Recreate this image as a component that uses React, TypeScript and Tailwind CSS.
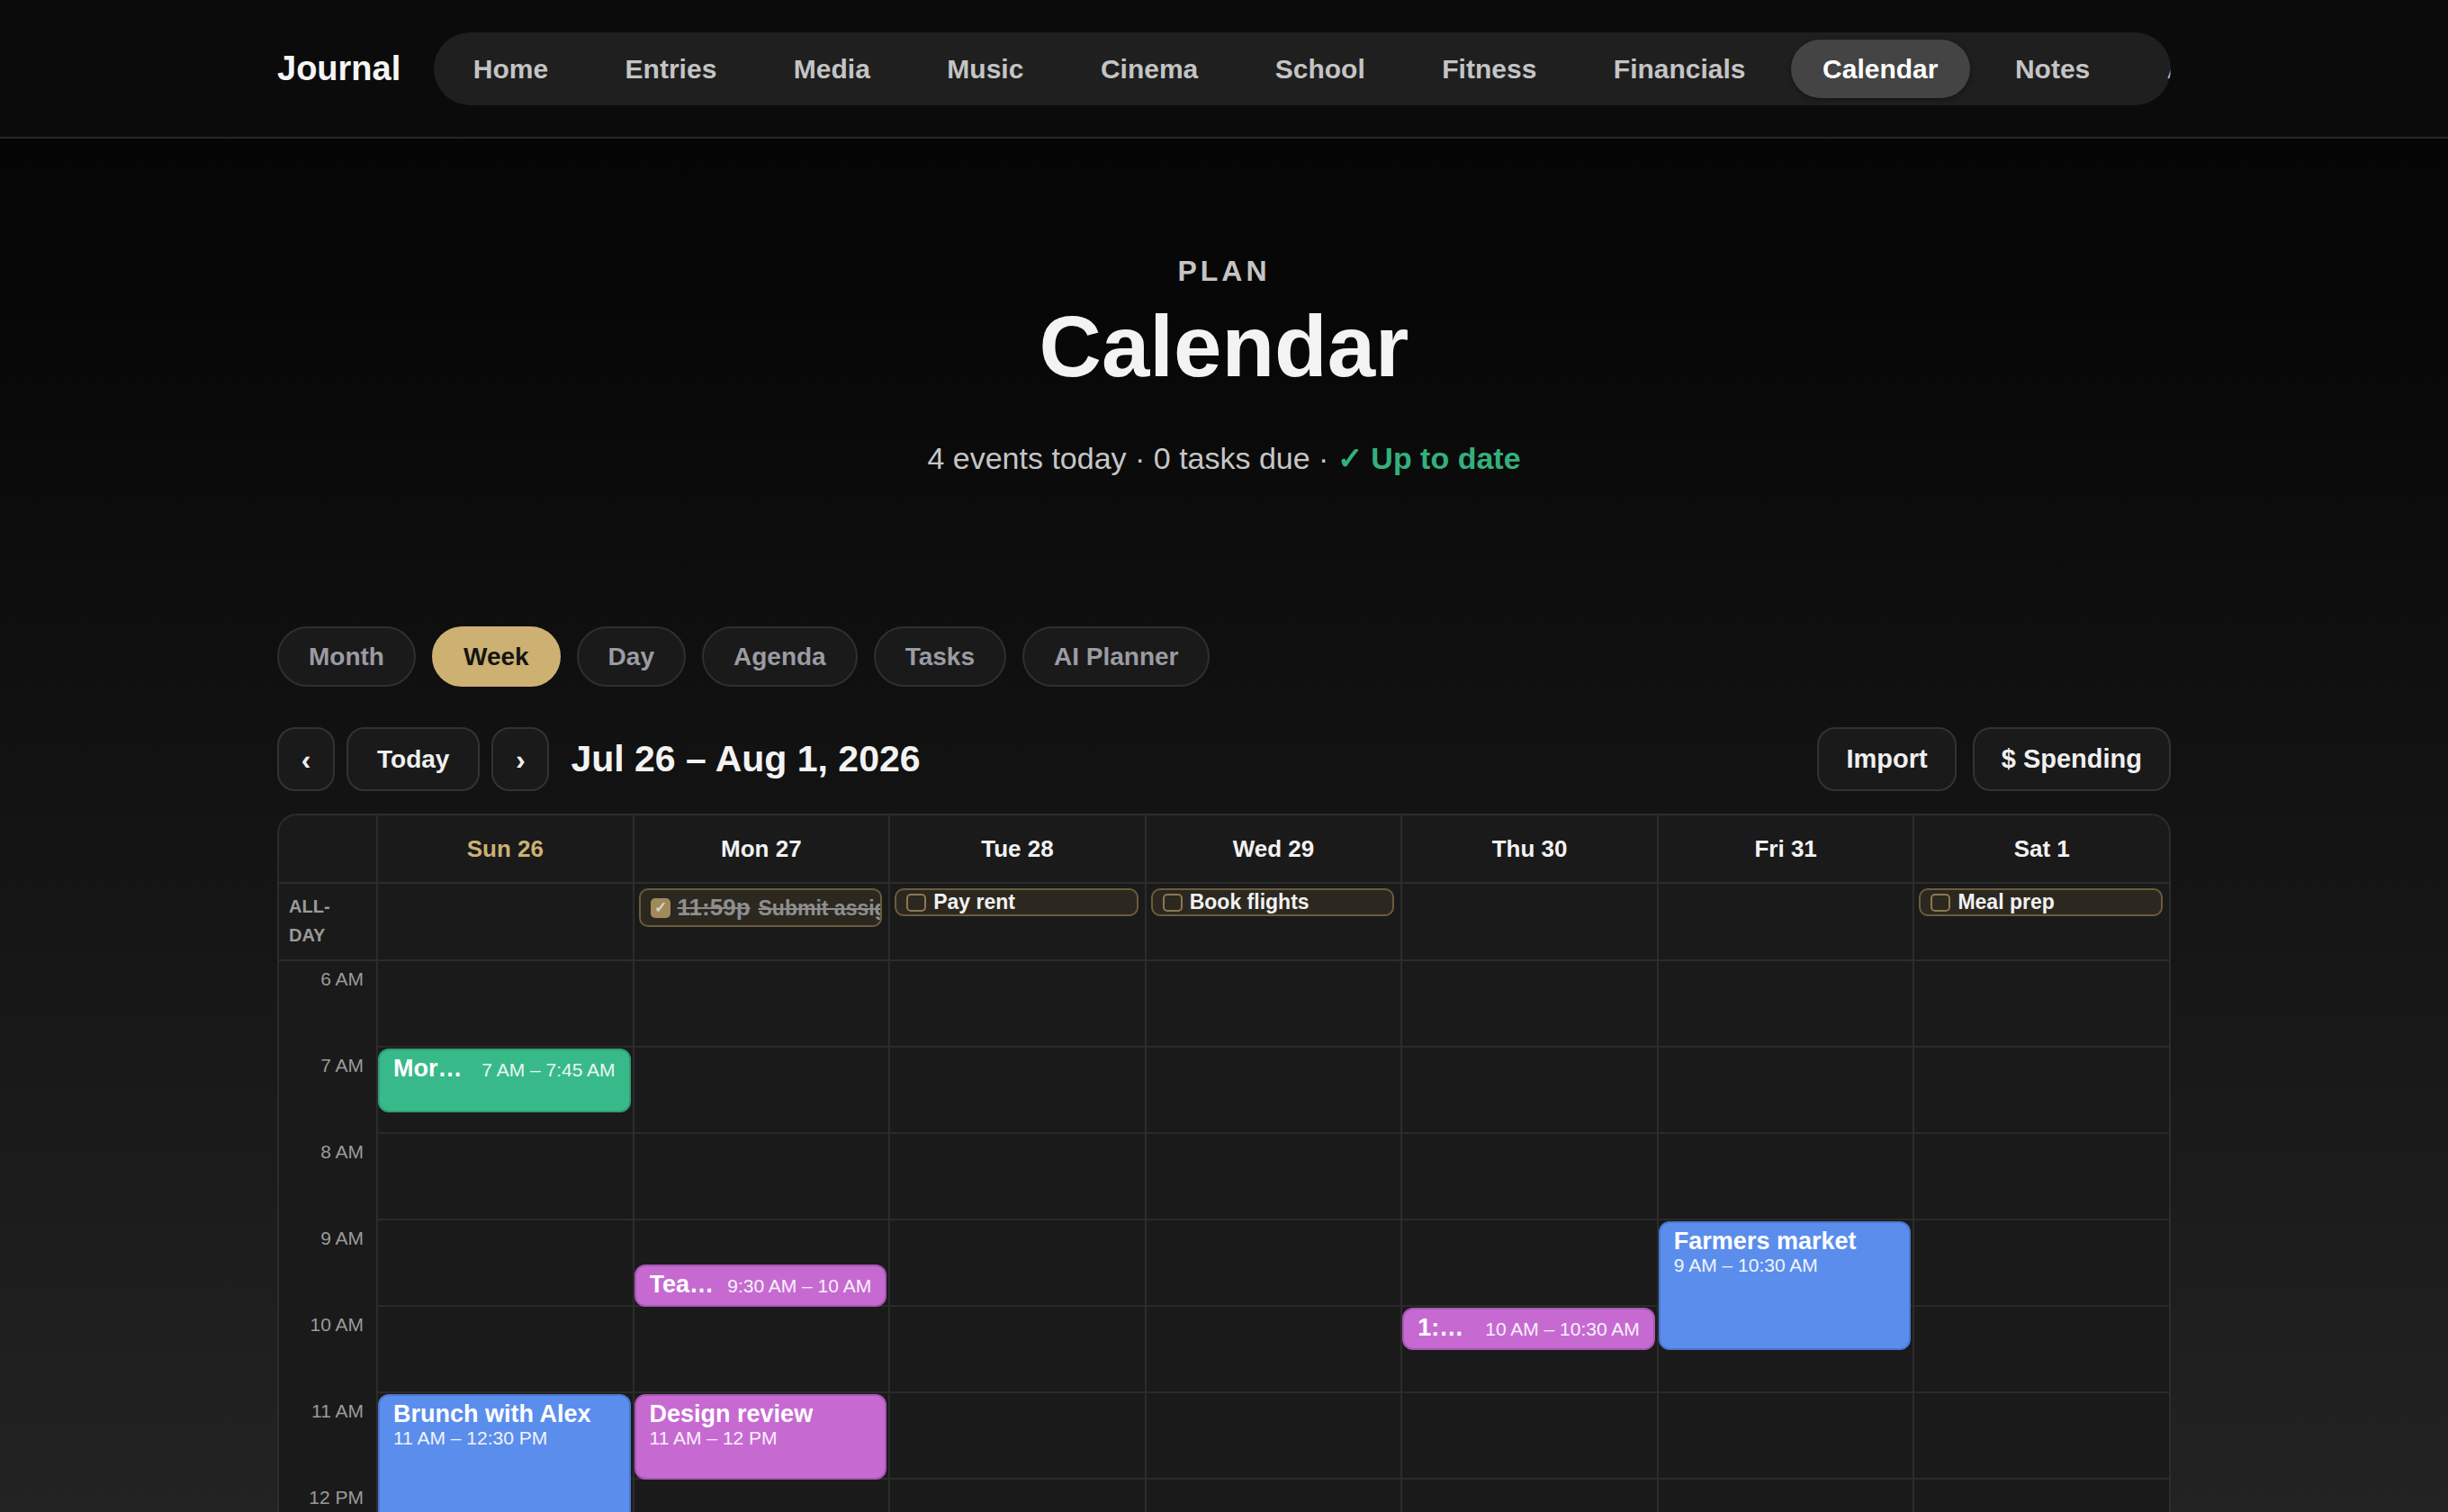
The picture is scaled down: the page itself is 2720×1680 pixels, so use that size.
import * as React from "react";

const NAV = ["Home", "Entries", "Media", "Music", "Cinema", "School", "Fitness", "Financials", "Calendar", "Notes", "Archive"];
const VIEWS = ["Month", "Week", "Day", "Agenda", "Tasks", "AI Planner"];
const DAYS = ["Sun 26", "Mon 27", "Tue 28", "Wed 29", "Thu 30", "Fri 31", "Sat 1"];
const FIRST_HOUR = 6;
const HOUR_PX = 96;

type Tone = "green" | "purple" | "blue";

const TONES: Record<Tone, string> = {
  green: "bg-[#38b98a] border-[#2f9d76]",
  purple: "bg-[#c66ad2] border-[#a856b4]",
  blue: "bg-[#5b8dec] border-[#4a77d0]",
};

type CalEvent = { day: number; start: number; end: number; title: string; tone: Tone };

const EVENTS: CalEvent[] = [
  { day: 0, start: 7, end: 7.75, title: "Morning run", tone: "green" },
  { day: 0, start: 11, end: 12.5, title: "Brunch with Alex", tone: "blue" },
  { day: 1, start: 9.5, end: 10, title: "Team standup", tone: "purple" },
  { day: 1, start: 11, end: 12, title: "Design review", tone: "purple" },
  { day: 4, start: 10, end: 10.5, title: "1:1 with Sam", tone: "purple" },
  { day: 5, start: 9, end: 10.5, title: "Farmers market", tone: "blue" },
];

type Task = { day: number; title: string; time?: string; done?: boolean };

const TASKS: Task[] = [
  { day: 1, title: "Submit assignment", time: "11:59p", done: true },
  { day: 2, title: "Pay rent" },
  { day: 3, title: "Book flights" },
  { day: 6, title: "Meal prep" },
];

function hourLabel(h: number): string {
  const suffix = h < 12 ? "AM" : "PM";
  const n = h % 12 === 0 ? 12 : h % 12;
  return `${n} ${suffix}`;
}

function timeLabel(t: number): string {
  const h = Math.floor(t);
  const m = Math.round((t - h) * 60);
  const suffix = h < 12 ? "AM" : "PM";
  const n = h % 12 === 0 ? 12 : h % 12;
  return m ? `${n}:${String(m).padStart(2, "0")} ${suffix}` : `${n} ${suffix}`;
}

const HOURS = Array.from({ length: 18 }, (_, i) => FIRST_HOUR + i);

function EventBlock({ ev }: { ev: CalEvent }) {
  const short = ev.end - ev.start <= 0.75;
  const range = `${timeLabel(ev.start)} – ${timeLabel(ev.end)}`;
  return (
    <div
      className={`absolute left-0 right-[2px] overflow-hidden rounded-[12px] border-2 px-[15px] pt-[5px] text-white ${TONES[ev.tone]}`}
      style={{ top: (ev.start - FIRST_HOUR) * HOUR_PX + 1, height: (ev.end - ev.start) * HOUR_PX - 1 }}
    >
      {short ? (
        <div className="flex items-baseline gap-[10px]">
          <span className="min-w-0 flex-1 truncate text-[27px] font-bold leading-[30px]">{ev.title}</span>
          <span className="shrink-0 text-[21px] leading-[24px] text-white/90">{range}</span>
        </div>
      ) : (
        <>
          <div className="truncate text-[27px] font-bold leading-[30px]">{ev.title}</div>
          <div className="text-[21px] leading-[24px] text-white/90">{range}</div>
        </>
      )}
    </div>
  );
}

function TaskChip({ task }: { task: Task }) {
  return (
    <div className="flex items-center gap-[8px] overflow-hidden whitespace-nowrap rounded-[10px] border-2 border-[#6b5c3b] bg-[#2c2820] py-[1px] pl-[11px] pr-[4px]">
      {task.done ? (
        <span className="flex h-[22px] w-[22px] shrink-0 items-center justify-center rounded-[5px] bg-[#a08a5b] text-[17px] font-bold leading-none text-[#d9d4c8]">
          ✓
        </span>
      ) : (
        <span className="h-[20px] w-[22px] shrink-0 rounded-[5px] border-2 border-[#8c7750]" />
      )}
      {task.time ? (
        <span className="flex items-baseline gap-[9px] text-[#8e8e8e] line-through">
          <span className="text-[26px] font-bold leading-[36px]">{task.time}</span>
          <span className="text-[23px] font-bold leading-[36px]">{task.title}</span>
        </span>
      ) : (
        <span className="text-[23px] font-bold leading-[25px] text-[#f2f2f2]">{task.title}</span>
      )}
    </div>
  );
}

export default function App() {
  return (
    <div className="min-h-screen bg-[linear-gradient(180deg,#040404_0px,#070707_350px,#111111_800px,#1b1b1b_1300px,#232323_1700px,#262626_3200px)] font-['Liberation_Sans',Arial,sans-serif] text-white">
      <header className="border-b-2 border-[#262626] bg-[#0b0b0b]">
        <div className="mx-auto flex h-[152px] max-w-[2104px] items-center gap-[37px]">
          <span className="shrink-0 text-[38px] font-bold text-[#f5f5f5]">Journal</span>
          <nav className="flex h-[81px] min-w-0 flex-1 items-center gap-[14.5px] overflow-hidden rounded-full bg-[#1f1f1f] p-2">
            {NAV.map((item) => (
              <span
                key={item}
                className={`flex h-[65px] shrink-0 items-center rounded-full px-[35.5px] text-[30px] font-bold ${
                  item === "Calendar" ? "bg-[#444444] text-white shadow-[0_2px_6px_rgba(0,0,0,0.35)]" : "text-[#c4c4c4]"
                }`}
              >
                {item}
              </span>
            ))}
          </nav>
        </div>
      </header>

      <main className="mx-auto max-w-[2104px] pb-20">
        <section className="flex flex-col items-center pt-[129px] text-center">
          <p className="text-[32px] font-bold leading-[37px] tracking-[4px] text-[#c4c4c4]">PLAN</p>
          <h1 className="mt-[17px] text-[96px] font-bold leading-none text-[#f3f3f3]">Calendar</h1>
          <p className="mt-[57px] text-[34px] leading-[39px] text-[#c6c6c6]">
            4 events today · 0 tasks due ·{" "}
            <span className="font-bold text-[#33b07c]">✓ Up to date</span>
          </p>
        </section>

        <div className="mt-[167px] flex gap-[18px]">
          {VIEWS.map((v) => (
            <button
              key={v}
              className={`h-[67px] rounded-full border-2 px-[33px] text-[28px] font-bold ${
                v === "Week"
                  ? "border-[#cdb173] bg-[#cdb173] text-[#151515]"
                  : "border-[#2f2f2f] bg-[#1a1a1a] text-[#9b9ba3]"
              }`}
            >
              {v}
            </button>
          ))}
        </div>

        <div className="mt-[45px] flex items-center justify-between">
          <div className="flex items-center gap-[13px]">
            <button className="flex h-[71px] w-[64px] items-center justify-center rounded-[20px] border-2 border-[#333333] bg-[#1a1a1a] text-[32px] font-bold text-[#f0f0f0]">
              ‹
            </button>
            <button className="h-[71px] rounded-[20px] border-2 border-[#333333] bg-[#1a1a1a] px-[32px] text-[28px] font-bold text-[#f0f0f0]">
              Today
            </button>
            <button className="flex h-[71px] w-[64px] items-center justify-center rounded-[20px] border-2 border-[#333333] bg-[#1a1a1a] text-[32px] font-bold text-[#f0f0f0]">
              ›
            </button>
            <h2 className="ml-[11px] text-[41px] font-bold text-[#f3f3f3]">Jul 26 – Aug 1, 2026</h2>
          </div>
          <div className="flex items-center gap-[18px]">
            <button className="h-[71px] rounded-[20px] border-2 border-[#333333] bg-[#1a1a1a] px-[30px] text-[29px] font-bold text-[#f0f0f0]">
              Import
            </button>
            <button className="h-[71px] rounded-[20px] border-2 border-[#333333] bg-[#1a1a1a] px-[30px] text-[29px] font-bold text-[#f0f0f0]">
              $ Spending
            </button>
          </div>
        </div>

        <div className="mt-[25px] overflow-hidden rounded-t-[22px] border-2 border-[#2c2c2c] bg-[#1a1a1a]">
          {/* day header */}
          <div className="grid grid-cols-[108px_repeat(7,minmax(0,1fr))] border-b-2 border-[#2c2c2c]">
            <div className="h-[74px]" />
            {DAYS.map((d, i) => (
              <div
                key={d}
                className={`flex h-[74px] items-center justify-center border-l-2 border-[#2c2c2c] text-[26px] font-bold ${
                  i === 0 ? "text-[#cdb173]" : "text-[#f2f2f2]"
                }`}
              >
                {d}
              </div>
            ))}
          </div>

          {/* all-day row */}
          <div className="grid grid-cols-[108px_repeat(7,minmax(0,1fr))] border-b-2 border-[#2c2c2c]">
            <div className="h-[84px] pl-[11px] pt-[9px]">
              <p className="w-[60px] text-[20px] font-bold uppercase leading-[32px] text-[#9a9a9a]">All-day</p>
            </div>
            {DAYS.map((d, i) => (
              <div key={d} className="min-w-0 border-l-2 border-[#2c2c2c] pl-[5px] pr-[7px] pt-[5px]">
                {TASKS.filter((t) => t.day === i).map((t) => (
                  <TaskChip key={t.title} task={t} />
                ))}
              </div>
            ))}
          </div>

          {/* time grid */}
          <div className="grid grid-cols-[108px_repeat(7,minmax(0,1fr))]">
            <div>
              {HOURS.map((h) => (
                <div key={h} className="h-[96px] pr-[14px] pt-[8px] text-right text-[21px] leading-[24px] text-[#9a9a9a]">
                  {hourLabel(h)}
                </div>
              ))}
            </div>
            {DAYS.map((d, i) => (
              <div key={d} className="relative border-l-2 border-[#2c2c2c]">
                {HOURS.map((h) => (
                  <div key={h} className="h-[96px] border-b-2 border-[#2a2a2a]" />
                ))}
                {EVENTS.filter((e) => e.day === i).map((e) => (
                  <EventBlock key={e.title} ev={e} />
                ))}
              </div>
            ))}
          </div>
        </div>
      </main>
    </div>
  );
}
